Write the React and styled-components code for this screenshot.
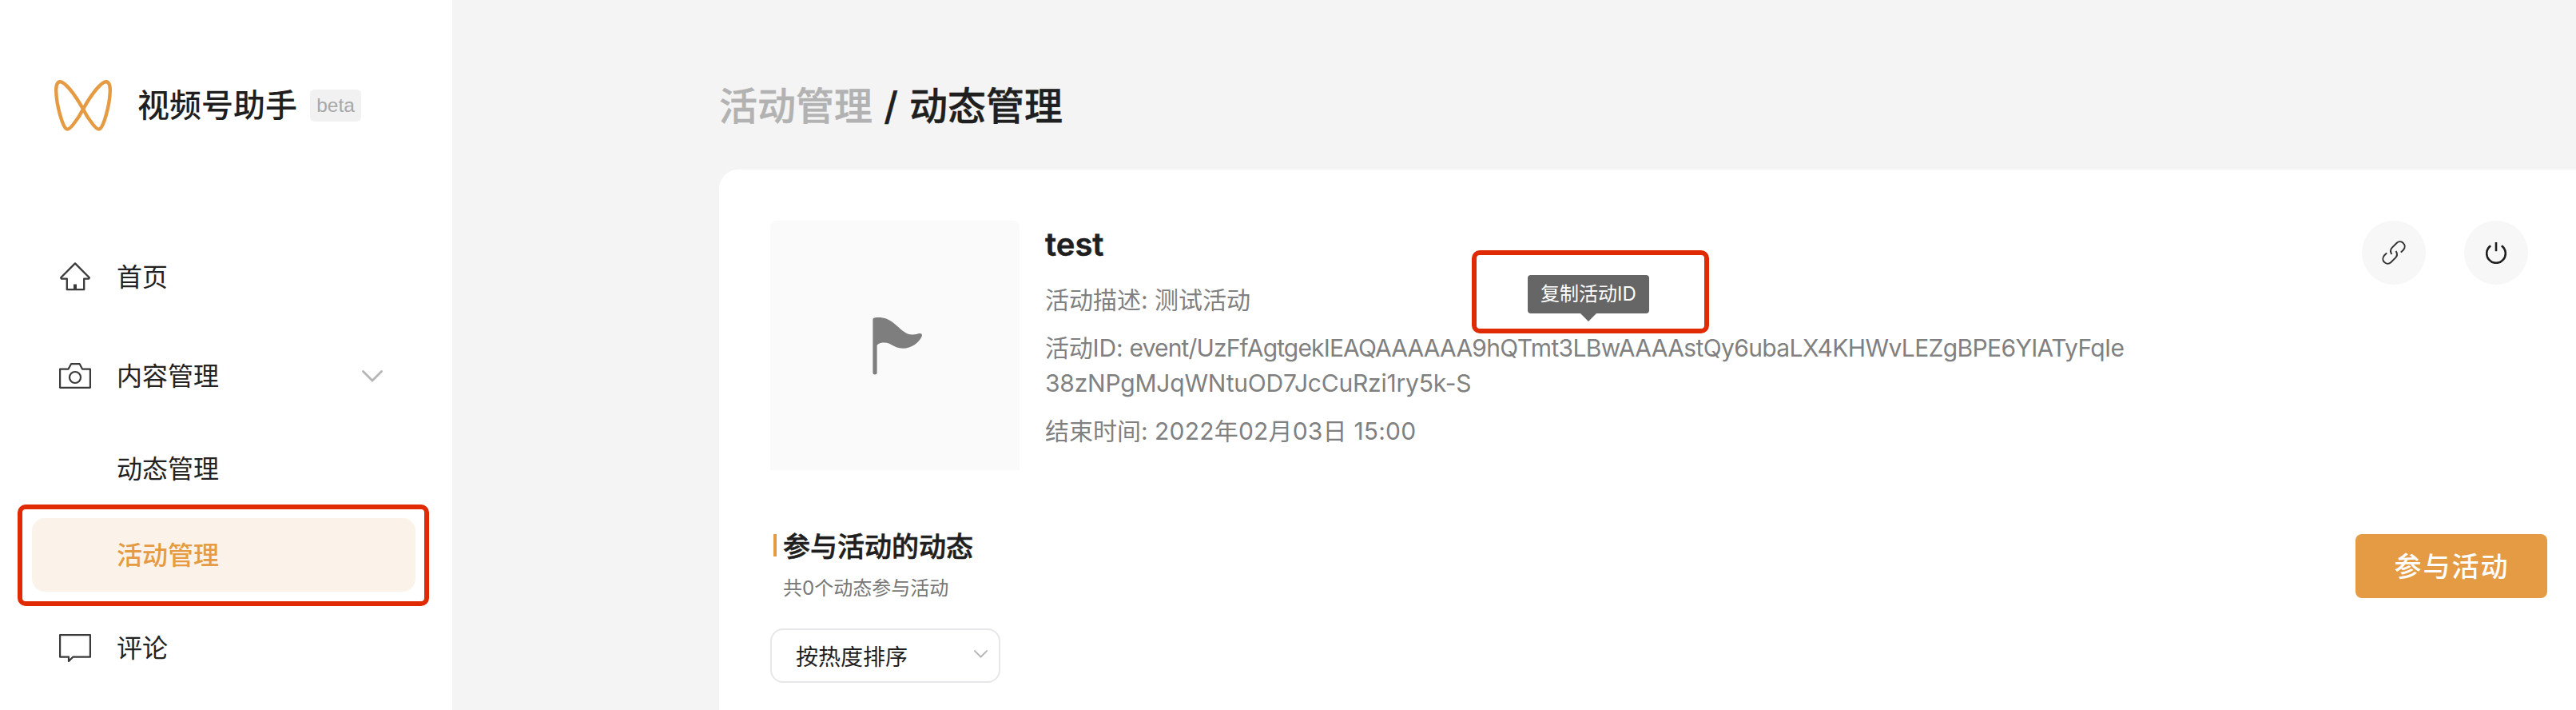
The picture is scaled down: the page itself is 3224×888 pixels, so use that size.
import React from "react";
import styled, { createGlobalStyle } from "styled-components";

const GlobalStyle = createGlobalStyle`
  * {
    box-sizing: border-box;
  }
  body {
    margin: 0;
    background-color: #f4f4f4;
    color: #1f1f1f;
    font-family: Inter, "Noto Sans CJK SC", sans-serif;
  }
  h1, h2, h3, p {
    margin: 0;
  }
  svg {
    display: block;
    flex-shrink: 0;
  }
`;

const Page = styled.div`
  display: flex;
  width: 100%;
  height: 888px;
  overflow: hidden;
`;

const Sidebar = styled.aside`
  flex-shrink: 0;
  width: 566px;
  padding: 92px 46px 0 40px;
  background-color: #fff;
`;

const Brand = styled.div`
  display: flex;
  align-items: center;
  height: 80px;
  margin-bottom: 120px;
  padding-left: 28px;
`;

const BrandName = styled.h1`
  width: 200px;
  margin-left: 32px;
  font-size: 40px;
  font-weight: 500;
  line-height: 56px;
  white-space: nowrap;
`;

const BetaTag = styled.span`
  width: 64px;
  height: 40px;
  margin-left: 16px;
  border-radius: 6px;
  background-color: #f1f1f1;
  color: #a8a8a8;
  font-family: "Liberation Sans", sans-serif;
  font-size: 24.5px;
  line-height: 40px;
  text-align: center;
`;

const Menu = styled.nav`
  display: flex;
  flex-direction: column;
  gap: 16px;
`;

const MenuItem = styled.div`
  position: relative;
  display: flex;
  align-items: center;
  height: ${({ $sub }) => ($sub ? "92px" : "108px")};
  padding: 0 41px 0 ${({ $sub }) => ($sub ? "106px" : "34px")};
  border-radius: 16px;
  background-color: ${({ $active }) => ($active ? "#fbf3e9" : "transparent")};
  color: ${({ $active }) => ($active ? "#e59b43" : "#222")};
  font-size: 32px;
  font-weight: ${({ $active }) => ($active ? 500 : 400)};
  line-height: 44px;
`;

const MenuIcon = styled.span`
  display: flex;
  justify-content: center;
  width: 40px;
  margin-right: 32px;
  color: #3a3a3a;
`;

const MenuText = styled.span`
  flex: 1;
  padding-top: 2px;
`;

const Mark = styled.div`
  position: absolute;
  border: 6px solid #df2a04;
  border-radius: 10px;
  pointer-events: none;
`;

const MenuMark = styled(Mark)`
  top: -17px;
  left: -18px;
  width: 515px;
  height: 127px;
`;

const TipMark = styled(Mark)`
  top: -31px;
  left: -70px;
  width: 297px;
  height: 104px;
`;

const Main = styled.main`
  flex: 1;
  min-width: 0;
  padding-left: 334px;
`;

const Breadcrumb = styled.h2`
  display: flex;
  height: 212px;
  padding-top: 99px;
  font-size: 48px;
  font-weight: 500;
  line-height: 68px;
  -webkit-text-stroke: 0.4px;
`;

const Parent = styled.span`
  color: #b2b2b2;
`;

const Slash = styled.span`
  width: 46px;
  text-align: center;
`;

const Card = styled.section`
  height: 676px;
  padding: 64px 36px 0 64px;
  border-top-left-radius: 24px;
  background-color: #fff;
`;

const Activity = styled.div`
  display: flex;
  align-items: flex-start;
  height: 312px;
`;

const Cover = styled.div`
  display: flex;
  align-items: center;
  justify-content: center;
  width: 312px;
  height: 312px;
  margin-right: 32px;
  padding: 2px 0 0 6px;
  border-radius: 8px 8px 0 0;
  background-color: #fafafa;
`;

const Info = styled.div`
  display: flex;
  flex-direction: column;
  gap: 16px;
  width: 1360px;
`;

const ActivityName = styled.h3`
  height: 61px;
  padding-top: 2px;
  font-size: 40px;
  font-weight: 600;
  line-height: 56px;
  -webkit-text-stroke: 0.5px;
`;

const InfoLine = styled.p`
  position: relative;
  color: #808080;
  font-size: 30px;
  line-height: 44px;
  white-space: nowrap;
`;

const Latin = styled.span`
  letter-spacing: ${({ $spacing }) => $spacing};
`;

const Tooltip = styled.div`
  position: absolute;
  top: -69px;
  left: 604px;
  width: 152px;
  height: 48px;
  border-radius: 4px;
  background-color: #666;
  color: #fff;
  font-size: 24px;
  line-height: 48px;
  text-align: center;

  &::after {
    content: "";
    position: absolute;
    top: 48px;
    left: 66px;
    border: 10px solid transparent;
    border-top-color: #666;
    border-bottom: 0;
  }
`;

const Actions = styled.div`
  display: flex;
  gap: 48px;
  margin-left: auto;
  margin-right: 24px;
`;

const RoundButton = styled.button`
  display: flex;
  align-items: center;
  justify-content: center;
  width: 80px;
  height: 80px;
  padding: 0;
  border: 0;
  border-radius: 50%;
  background-color: #f7f7f7;
  color: #1f1f1f;
`;

const FeedHeader = styled.div`
  display: flex;
  justify-content: space-between;
  align-items: flex-start;
  margin-top: 80px;
`;

const FeedTitle = styled.h3`
  display: flex;
  align-items: center;
  height: 32px;
  padding-left: 4px;
  font-size: 34px;
  font-weight: 500;
  line-height: 32px;
  -webkit-text-stroke: 0.6px;

  &::before {
    content: "";
    width: 4px;
    height: 28px;
    margin: 0 8px 4px 0;
    background-color: #e59b43;
  }
`;

const FeedCount = styled.p`
  margin-top: 19px;
  padding-left: 16px;
  color: #777;
  font-size: 24px;
  line-height: 34px;
`;

const JoinButton = styled.button`
  width: 240px;
  height: 80px;
  padding: 0 0 3px 1px;
  border: 0;
  border-radius: 8px;
  background-color: #e59b43;
  color: #fff;
  font-family: inherit;
  font-size: 34px;
  font-weight: 500;
  letter-spacing: 2px;
`;

const SortSelect = styled.div`
  display: flex;
  align-items: center;
  justify-content: space-between;
  width: 288px;
  height: 68px;
  margin-top: 33px;
  padding: 4px 14px 0 30px;
  border: 2px solid #e7e7eb;
  border-radius: 16px;
  color: #1f1f1f;
  font-size: 28px;
  line-height: 40px;

  svg {
    margin-bottom: 8px;
  }
`;

const LogoIcon = () => (
  <svg width="72" height="64" viewBox="0 0 72 64" fill="none" stroke="#e59b43" strokeWidth="4.4" strokeLinejoin="round">
    <path d="M36 36.5C24 15 12.5 2.2 7.2 2.2C2.8 2.2 2.1 9 2.2 14C2.8 33 10.5 58.5 15 61.2C17.5 62.8 21.5 58.5 24.5 54.5C28.5 49.5 32.8 43 36 36.5C48 15 59.5 2.2 64.8 2.2C69.2 2.2 69.9 9 69.8 14C69.2 33 61.5 58.5 57 61.2C54.5 62.8 50.5 58.5 47.5 54.5C43.5 49.5 39.2 43 36 36.5Z" />
  </svg>
);

const HomeIcon = () => (
  <svg width="38" height="36" viewBox="0 0 38 36" fill="none" stroke="currentColor" strokeWidth="2.3" strokeLinejoin="round">
    <path d="M19 1.4L36.8 19.2L36.2 20.6H30.2V34.2H8.8V20.6H1.8L1.2 19.2Z" />
    <path d="M19 27.5V34" strokeWidth="4" />
  </svg>
);

const CameraIcon = () => (
  <svg width="40" height="32" viewBox="0 0 40 32" fill="none" stroke="currentColor" strokeWidth="2.2" strokeLinejoin="round">
    <path d="M1.1 7.6H11.6L15 1.2H25.7L29 7.6H38.9V30.8H1.1Z" />
    <circle cx="20" cy="18" r="7" />
  </svg>
);

const CommentIcon = () => (
  <svg width="40" height="35" viewBox="0 0 40 35" fill="none" stroke="currentColor" strokeWidth="2.2" strokeLinejoin="round">
    <path d="M1.1 1.1H38.9V28.7H17.2L12 34V28.7H1.1Z" />
  </svg>
);

const ArrowIcon = ({ width, height, strokeWidth }) => (
  <svg width={width} height={height} viewBox="0 0 26 15" fill="none" stroke="#b5b5b5" strokeWidth={strokeWidth} strokeLinecap="round">
    <path d="M1.5 1.5L13 13L24.5 1.5" />
  </svg>
);

const FlagIcon = () => (
  <svg width="62" height="72" viewBox="0 0 62 72" fill="#7e7e7e">
    <path d="M2.5 0.4C12 -0.8 20 1.5 27 7.5C36 15 41 21.6 50 21.6C54 21.6 56 20.8 58.5 20.1C61.5 19.3 62.6 21.5 61.6 24C58 31.5 49 38.7 38 38.7C26 38.7 24 31.6 14.5 31.6C9.5 31.6 7.5 33 5.6 34.8V69.2C5.6 72.2 0.4 72.2 0.4 69.2V3.2C0.4 1.4 1 0.6 2.5 0.4Z" />
  </svg>
);

const LinkIcon = () => (
  <svg width="30" height="30" viewBox="0 0 30 30" fill="none" stroke="#333" strokeWidth="2">
    <path d="M23.8 14.6L27.2 11.2A6 6 0 0 0 18.8 2.7L12.9 8.6C10.8 10.8 10.6 14.2 12.4 17" />
    <path d="M6.2 15.4L2.8 18.8A6 6 0 0 0 11.2 27.3L17.1 21.4C19.2 19.2 19.4 15.8 17.6 13" />
  </svg>
);

const PowerIcon = () => (
  <svg width="26" height="27" viewBox="0 0 26 27" fill="none" stroke="currentColor" strokeWidth="2.6">
    <path d="M6.2 4.4A11.8 11.8 0 1 0 19.8 4.4" />
    <path d="M13 0V11.2" />
  </svg>
);

function App() {
  return (
    <Page>
      <GlobalStyle />
      <Sidebar>
        <Brand>
          <LogoIcon />
          <BrandName>视频号助手</BrandName>
          <BetaTag>beta</BetaTag>
        </Brand>
        <Menu>
          <MenuItem>
            <MenuIcon><HomeIcon /></MenuIcon>
            <MenuText>首页</MenuText>
          </MenuItem>
          <MenuItem>
            <MenuIcon><CameraIcon /></MenuIcon>
            <MenuText>内容管理</MenuText>
            <ArrowIcon width={26} height={15} strokeWidth={2.8} />
          </MenuItem>
          <MenuItem $sub>
            <MenuText>动态管理</MenuText>
          </MenuItem>
          <MenuItem $sub $active>
            <MenuText>活动管理</MenuText>
            <MenuMark />
          </MenuItem>
          <MenuItem>
            <MenuIcon><CommentIcon /></MenuIcon>
            <MenuText>评论</MenuText>
          </MenuItem>
        </Menu>
      </Sidebar>
      <Main>
        <Breadcrumb>
          <Parent>活动管理</Parent>
          <Slash>/</Slash>
          <span>动态管理</span>
        </Breadcrumb>
        <Card>
          <Activity>
            <Cover><FlagIcon /></Cover>
            <Info>
              <ActivityName>test</ActivityName>
              <InfoLine>活动描述: 测试活动</InfoLine>
              <InfoLine>
                <Latin $spacing="-0.2px">活动ID: </Latin>
                <Latin $spacing="-0.85px">event/UzFfAgtgekIEAQAAAAAA</Latin>
                <Latin $spacing="-0.63px">9hQTmt3LBwAAAAstQy6ubaLX4KHWvLEZgBPE6YIATyFqIe</Latin>
                <br />
                <Latin $spacing="-0.2px">38zNPgMJqWNtuOD7JcCuRzi1ry5k-S</Latin>
                <Tooltip>
                  复制活动ID
                  <TipMark />
                </Tooltip>
              </InfoLine>
              <InfoLine>
                结束时间: <Latin $spacing="0.2px">2022年02月03日 15:00</Latin>
              </InfoLine>
            </Info>
            <Actions>
              <RoundButton><LinkIcon /></RoundButton>
              <RoundButton><PowerIcon /></RoundButton>
            </Actions>
          </Activity>
          <FeedHeader>
            <div>
              <FeedTitle>参与活动的动态</FeedTitle>
              <FeedCount>共0个动态参与活动</FeedCount>
            </div>
            <JoinButton>参与活动</JoinButton>
          </FeedHeader>
          <SortSelect>
            按热度排序
            <ArrowIcon width={17} height={10} strokeWidth={3} />
          </SortSelect>
        </Card>
      </Main>
    </Page>
  );
}

export default App;
